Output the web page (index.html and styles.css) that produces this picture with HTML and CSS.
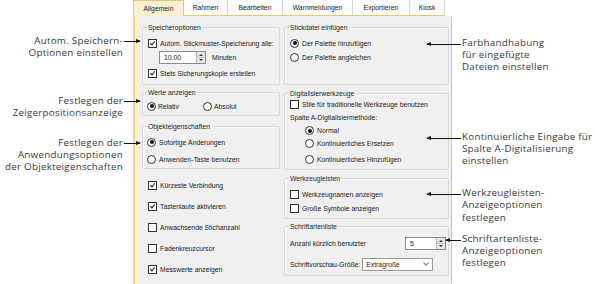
FILE: index.html
```html
<!DOCTYPE html>
<html lang="de">
<head>
  <meta charset="UTF-8" />
  <title>Optionen – Allgemein</title>
  <link rel="stylesheet" href="styles.css">
</head>
<body>
<div class="page">

  <div class="notes notes-left">
    <p class="note n1">Autom. Speichern-<br>Optionen einstellen<i class="arrow to-right"></i></p>
    <p class="note n2">Festlegen der<br>Zeigerpositionsanzeige<i class="arrow to-right"></i></p>
    <p class="note n3">Festlegen der<br>Anwendungsoptionen<br>der Objekteigenschaften<i class="arrow to-right"></i></p>
  </div>

  <div class="dialog">
    <div class="tabs">
      <span class="tab active t1">Allgemein</span>
      <span class="tab t2">Rahmen</span>
      <span class="tab t3">Bearbeiten</span>
      <span class="tab t4">Warnmeldungen</span>
      <span class="tab t5">Exportieren</span>
      <span class="tab t6">Kiosk</span>
    </div>

    <div class="panel">
      <div class="col col-left">
        <fieldset class="group g-save">
          <legend>Speicheroptionen</legend>
          <div class="row"><span class="cb on"></span>Autom. Stickmuster-Speicherung alle:</div>
          <div class="row indent">
            <span class="spin"><span class="spin-val">10.00</span><span class="spin-btns"><i class="up"></i><i class="down"></i></span></span>
            <span class="unit">Minuten</span>
          </div>
          <div class="row gap2"><span class="cb on"></span>Stets Sicherungskopie erstellen</div>
        </fieldset>

        <fieldset class="group g-values">
          <legend>Werte anzeigen</legend>
          <div class="row">
            <span class="opt"><span class="rb on"></span>Relativ</span>
            <span class="opt"><span class="rb"></span>Absolut</span>
          </div>
        </fieldset>

        <fieldset class="group g-props">
          <legend>Objekteigenschaften</legend>
          <div class="row"><span class="rb on"></span>Sofortige Änderungen</div>
          <div class="row gap3"><span class="rb"></span>Anwenden-Taste benutzen</div>
        </fieldset>

        <div class="checks">
          <div class="row"><span class="cb on"></span>Kürzeste Verbindung</div>
          <div class="row"><span class="cb on"></span>Tastenlaute aktivieren</div>
          <div class="row"><span class="cb"></span>Anwachsende Stichanzahl</div>
          <div class="row"><span class="cb"></span>Fadenkreuzcursor</div>
          <div class="row"><span class="cb on"></span>Messwerte anzeigen</div>
        </div>
      </div>

      <div class="col col-right">
        <fieldset class="group g-insert">
          <legend>Stickdatei einfügen</legend>
          <div class="row"><span class="rb on"></span>Der Palette hinzufügen</div>
          <div class="row"><span class="rb"></span>Der Palette angleichen</div>
        </fieldset>

        <fieldset class="group g-digi">
          <legend>Digitalisierwerkzeuge</legend>
          <div class="row"><span class="cb"></span>Stile für traditionelle Werkzeuge benutzen</div>
          <div class="row">Spalte A-Digitalisiermethode:</div>
          <div class="row indent"><span class="rb on"></span>Normal</div>
          <div class="row indent"><span class="rb"></span>Kontinuierliches Ersetzen</div>
          <div class="row indent gap3"><span class="rb"></span>Kontinuierliches Hinzufügen</div>
        </fieldset>

        <fieldset class="group g-tools">
          <legend>Werkzeugleisten</legend>
          <div class="row"><span class="cb"></span>Werkzeugnamen anzeigen</div>
          <div class="row"><span class="cb"></span>Große Symbole anzeigen</div>
        </fieldset>

        <fieldset class="group g-fonts">
          <legend>Schriftartenliste</legend>
          <div class="row split">
            <span>Anzahl kürzlich benutzter</span>
            <span class="spin spin-wide"><span class="spin-val">5</span><span class="spin-btns"><i class="up"></i><i class="down"></i></span></span>
          </div>
          <div class="row gap7">
            <span>Schriftvorschau-Größe:</span>
            <span class="select">Extragroße<i class="chev"></i></span>
          </div>
        </fieldset>
      </div>
    </div>
  </div>

  <div class="notes notes-right">
    <p class="note r1">Farbhandhabung<br>für eingefügte<br>Dateien einstellen<i class="arrow to-left"></i></p>
    <p class="note r2">Kontinuierliche Eingabe für<br>Spalte A-Digitalisierung<br>einstellen<i class="arrow to-left"></i></p>
    <p class="note r3">Werkzeugleisten-<br>Anzeigeoptionen<br>festlegen<i class="arrow to-left"></i></p>
    <p class="note r4">Schriftartenliste-<br>Anzeigeoptionen<br>festlegen<i class="arrow to-left short"></i></p>
  </div>

</div>
</body>
</html>
```

FILE: styles.css
```css
body {
  margin: 0;
  background: #fff;
  font-family: "Liberation Sans", Arial, sans-serif;
  color: #1a1a1a;
}
.page {
  display: flex;
  width: 595px;
  height: 284px;
  overflow: hidden;
}

/* callout notes */
.notes {
  font-family: "Open Sans", "Noto Sans", sans-serif;
  font-size: 9.8px;
  letter-spacing: 0.25px;
  line-height: 12.2px;
  color: #3a3a3a;
}
.notes-left {
  width: 133px;
  flex: none;
  text-align: right;
}
.notes-left .note {
  position: relative;
  margin: 0 10px 0 0;
}
.notes-right {
  flex: 1;
  padding-left: 10px;
}
.notes-right .note {
  position: relative;
  margin: 0;
}
.n1 { margin-top: 35px !important; }
.n2 { margin-top: 35.6px !important; }
.n3 { margin-top: 17.6px !important; }
.r1 { margin-top: 37px !important; }
.r2 { margin-top: 57px !important; }
.r3 { margin-top: 20px !important; }
.r4 { margin-top: 9px !important; }

.arrow {
  position: absolute;
  top: 6px;
  height: 1px;
  background: #111;
}
.arrow::after {
  content: "";
  position: absolute;
  top: -2px;
  border-top: 2.5px solid transparent;
  border-bottom: 2.5px solid transparent;
}
.arrow.to-right {
  left: calc(100% + 1px);
  width: 16px;
}
.arrow.to-right::after {
  right: -1px;
  border-left: 5px solid #111;
}
.arrow.to-left {
  left: -35px;
  width: 34px;
  top: 7px;
}
.arrow.to-left.short {
  left: -16px;
  width: 15px;
}
.arrow.to-left::after {
  left: -1px;
  border-right: 5px solid #111;
}

/* dialog */
.dialog {
  width: 319px;
  flex: none;
  font-size: 6.8px;
}
.tabs {
  display: flex;
  height: 16px;
}
.tab {
  height: 15px;
  line-height: 16px;
  text-align: center;
  background: #fdfdfd;
  border-right: 1px solid #d9d9d9;
  border-bottom: 1px solid #e6c873;
  color: #222;
}
.tab.active {
  background: #fcf0d2;
  border: 1px solid #e6c873;
  border-bottom: none;
  height: 15px;
  line-height: 15px;
}
.t1 { width: 49px; }
.t2 { width: 43px; }
.t3 { width: 54px; }
.t4 { width: 69px; }
.t5 { width: 56px; }
.t6 { width: 34px; }

.panel {
  display: flex;
  gap: 4px;
  height: 272px;
  padding: 7px 2px 0 7px;
  background: #f0f0f0;
  border: 1px solid #e6c873;
  border-top: none;
  border-left: 2px solid #f1d37c;
  box-shadow: inset 2px 0 0 #fbefcd;
}
.col-left { width: 138px; }
.col-right { width: 165px; }

.group {
  margin: 0;
  padding: 0 2px 0 5px;
  border: 1px solid #dadada;
  border-radius: 2px;
  box-shadow: inset 1px 1px 0 #fafafa;
}
.group legend {
  padding: 0 1px;
  margin-left: -1px;
  line-height: 9px;
  color: #222;
}
.g-save { padding-top: 4px; padding-bottom: 4px; }
.g-values { margin-top: 3px; padding-top: 2px; padding-bottom: 2px; }
.g-props { margin-top: 6px; padding-top: 4px; padding-bottom: 2px; }
.g-insert { padding-top: 4px; padding-bottom: 20px; }
.g-digi { margin-top: 4px; padding-bottom: 3px; }
.g-tools { margin-top: 4px; padding-top: 4px; padding-bottom: 3px; }
.g-fonts { margin-top: 3px; padding-top: 5px; padding-bottom: 4px; }

.row {
  display: flex;
  align-items: center;
  gap: 2px;
  height: 14px;
  white-space: nowrap;
}
.g-digi .row { height: 13px; }
.g-digi .row.indent { margin-left: 15px; }
.gap2 { margin-top: 2px; }
.gap3 { margin-top: 3px; }
.gap7 { margin-top: 7px; }
.split { justify-content: space-between; }
.indent { margin-left: 11px; }
.opt {
  display: flex;
  align-items: center;
  gap: 1px;
  width: 54px;
}
.g-values .row { margin-left: -1px; }
.g-props .row { margin-left: -1px; }

.checks {
  display: flex;
  flex-direction: column;
  gap: 7px;
  margin: 9px 0 0 6px;
}

/* check boxes and radio buttons */
.cb, .rb {
  flex: none;
  position: relative;
  width: 7px;
  height: 7px;
  background: #fff;
  border: 1px solid #333;
  margin-right: 1px;
}
.rb { border-radius: 50%; }
.cb.on::after {
  content: "";
  position: absolute;
  left: 2px;
  top: 0;
  width: 2px;
  height: 4px;
  border-right: 1px solid #222;
  border-bottom: 1px solid #222;
  transform: rotate(40deg);
}
.rb.on::after {
  content: "";
  position: absolute;
  left: 1.5px;
  top: 1.5px;
  width: 4px;
  height: 4px;
  border-radius: 50%;
  background: #111;
}

/* spin box and select */
.spin {
  display: flex;
  width: 45px;
  height: 11px;
  background: #fff;
  border: 1px solid #8a8a8a;
}
.spin-wide { width: 39px; }
.spin-val {
  flex: 1;
  padding-left: 4px;
  line-height: 11px;
}
.spin-btns {
  width: 8px;
  display: flex;
  flex-direction: column;
  background: #e6e6e6;
  border-left: 1px solid #b5b5b5;
}
.spin-btns i {
  flex: 1;
  position: relative;
}
.spin-btns i::after {
  content: "";
  position: absolute;
  left: 2px;
  top: 2px;
  border-left: 2px solid transparent;
  border-right: 2px solid transparent;
}
.spin-btns .up::after { border-bottom: 2px solid #333; }
.spin-btns .down { border-top: 1px solid #c8c8c8; }
.spin-btns .down::after { border-top: 2px solid #333; top: 1px; }
.unit { margin-left: 4px; }

.select {
  position: relative;
  width: 66px;
  height: 11px;
  line-height: 11px;
  padding-left: 3px;
  background: #fff;
  border: 1px solid #9a9a9a;
}
.chev {
  position: absolute;
  right: 4px;
  top: 2px;
  width: 3px;
  height: 3px;
  border-right: 1px solid #777;
  border-bottom: 1px solid #777;
  transform: rotate(45deg);
}
```
